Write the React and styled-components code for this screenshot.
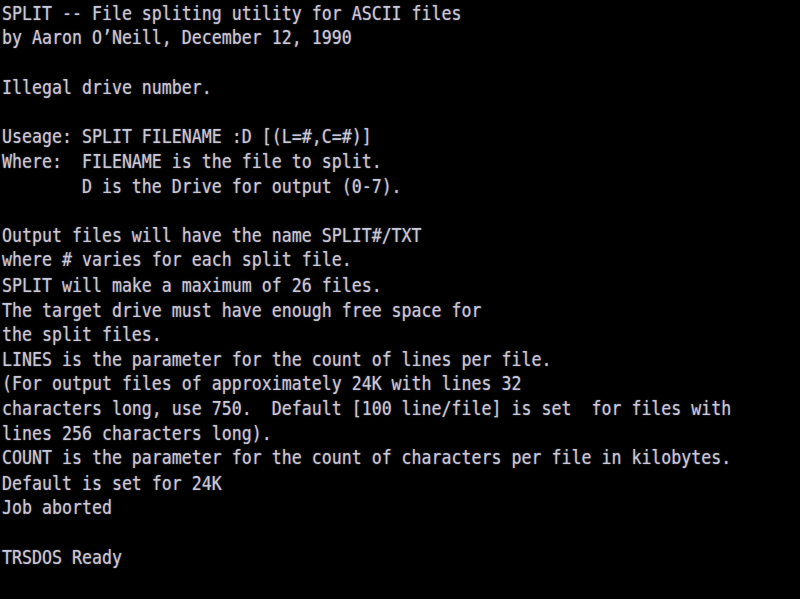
import React from 'react';
import styled, { createGlobalStyle } from 'styled-components';

const GlobalStyle = createGlobalStyle`
  html, body {
    margin: 0;
    padding: 0;
    background: #000;
    overflow: hidden;
  }
`;

const Screen = styled.div`
  width: 800px;
  height: 599px;
  background: #000;
  overflow: hidden;
`;

// текст вытянут по вертикали, как у шрифта TRS-80
const TextBlock = styled.div`
  padding: 1.5px 0 0 2px;
  font-family: 'DejaVu Sans Mono', 'Liberation Mono', monospace;
  font-size: 16.6px;
  line-height: 20.6px;
  color: #c8c8da;
  text-shadow: 0 0 1.5px rgba(200, 200, 225, 0.55);
  transform: scaleY(1.2);
  transform-origin: top left;
`;

const Line = styled.div`
  white-space: pre;
  height: 20.6px;
`;

const lines = [
  'SPLIT -- File spliting utility for ASCII files',
  'by Aaron O\u2019Neill, December 12, 1990',
  '',
  'Illegal drive number.',
  '',
  'Useage: SPLIT FILENAME :D [(L=#,C=#)]',
  'Where:  FILENAME is the file to split.',
  '        D is the Drive for output (0-7).',
  '',
  'Output files will have the name SPLIT#/TXT',
  'where # varies for each split file.',
  'SPLIT will make a maximum of 26 files.',
  'The target drive must have enough free space for',
  'the split files.',
  'LINES is the parameter for the count of lines per file.',
  '(For output files of approximately 24K with lines 32',
  'characters long, use 750.  Default [100 line/file] is set  for files with',
  'lines 256 characters long).',
  'COUNT is the parameter for the count of characters per file in kilobytes.',
  'Default is set for 24K',
  'Job aborted',
  '',
  'TRSDOS Ready',
];

function App() {
  return (
    <Screen>
      <GlobalStyle />
      <TextBlock>
        {lines.map((text, i) => (
          <Line key={i}>{text}</Line>
        ))}
      </TextBlock>
    </Screen>
  );
}

export default App;
